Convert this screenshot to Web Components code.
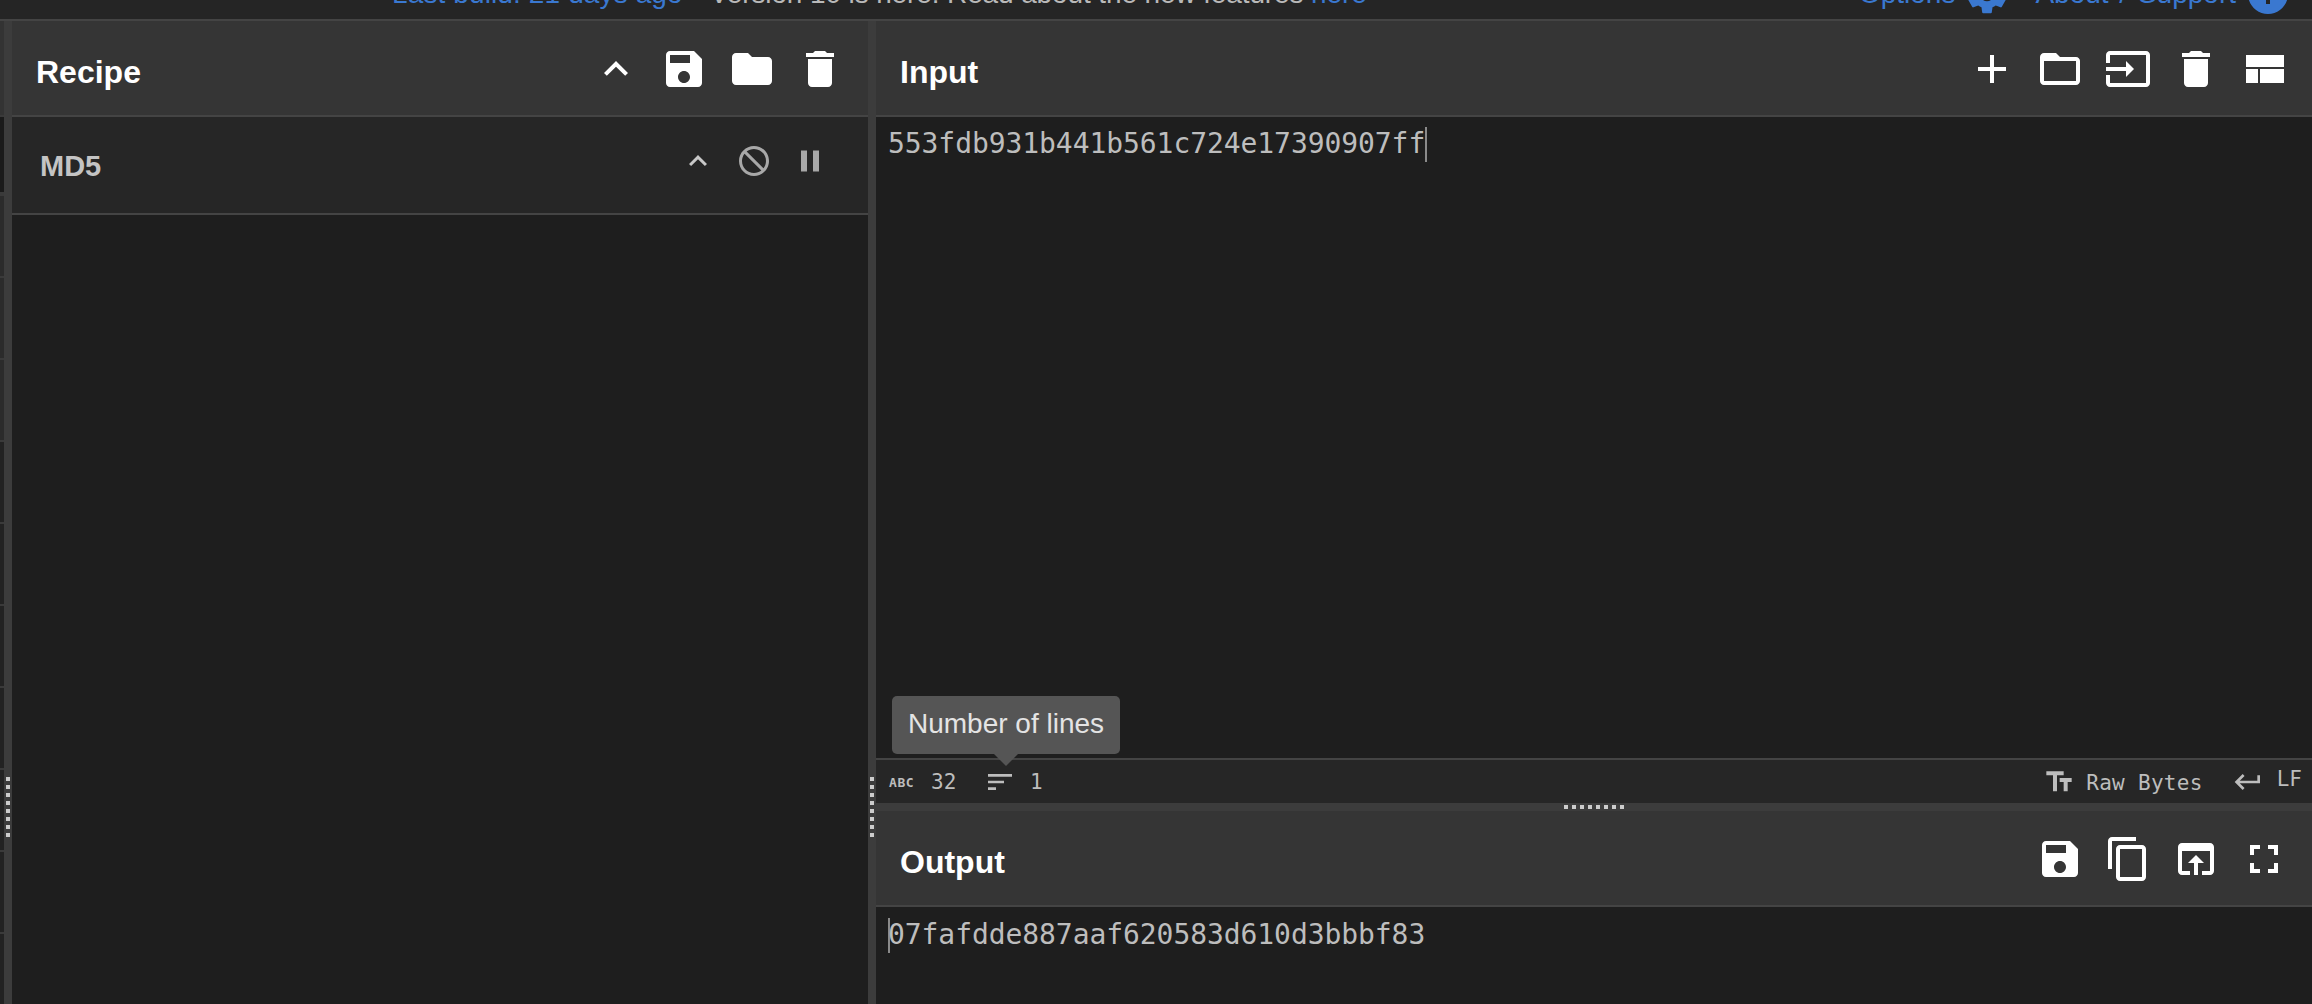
<!DOCTYPE html>
<html lang="en">
<head>
<meta charset="utf-8">
<title>CyberChef</title>
<style>
    html, body {
        margin: 0;
        height: 100%;
        overflow: hidden;
        background: #1e1e1e;
    }
</style>
</head>
<body>
<chef-app></chef-app>

<script>
/**
 * Material icon paths used across the panes.
 */
const ICONS = {
    up: 'M7.41 15.41L12 10.83l4.59 4.58L18 14l-6-6-6 6z',
    save: 'M17 3H5c-1.11 0-2 .9-2 2v14c0 1.1.89 2 2 2h14c1.1 0 2-.9 2-2V7l-4-4zm-5 16c-1.66 0-3-1.34-3-3s1.34-3 3-3 3 1.34 3 3-1.34 3-3 3zm3-10H5V5h10v4z',
    folder: 'M10 4H4c-1.1 0-2 .9-2 2v12c0 1.1.9 2 2 2h16c1.1 0 2-.9 2-2V8c0-1.1-.9-2-2-2h-8l-2-2z',
    folderOpen: 'M10 4H4c-1.1 0-2 .9-2 2v12c0 1.1.9 2 2 2h16c1.1 0 2-.9 2-2V8c0-1.1-.9-2-2-2h-8l-2-2zm10 14H4V8h16v10z',
    trash: 'M6 19c0 1.1.9 2 2 2h8c1.1 0 2-.9 2-2V7H6v12zM19 4h-3.5l-1-1h-5l-1 1H5v2h14V4z',
    ban: 'M12 2C17.52 2 22 6.48 22 12s-4.48 10-10 10-10-4.48-10-10S6.48 2 12 2zM20 12c0-4.42-3.58-8-8-8-1.85 0-3.55.63-4.9 1.69L18.31 16.9C19.37 15.55 20 13.85 20 12zm-8 8c1.85 0 3.55-.63 4.9-1.69L5.69 7.1C4.63 8.45 4 10.15 4 12c0 4.42 3.58 8 8 8z',
    pause: 'M6 19h4V5H6v14zm8-14v14h4V5h-4z',
    plus: 'M19 13h-6v6h-2v-6H5v-2h6V5h2v6h6v2z',
    input: 'M21 3.01H3c-1.1 0-2 .9-2 2V9h2V4.99h18v14.03H3V15H1v4.01c0 1.1.9 1.98 2 1.98h18c1.1 0 2-.88 2-1.98v-14c0-1.11-.9-2-2-2zM11 16l4-4-4-4v3H1v2h10v3z',
    quilt: 'M3 5h19v6H3zM3 12h6v7H3zM10 12h12v7H10z',
    copy: 'M16 1H4c-1.1 0-2 .9-2 2v14h2V3h12V1zm3 4H8c-1.1 0-2 .9-2 2v14c0 1.1.9 2 2 2h11c1.1 0 2-.9 2-2V7c0-1.1-.9-2-2-2zm0 16H8V7h11v14z',
    openIn: 'M19 4H5c-1.11 0-2 .9-2 2v12c0 1.1.89 2 2 2h4v-2H5V8h14v10h-4v2h4c1.1 0 2-.9 2-2V6c0-1.1-.89-2-2-2zm-7 6l-4 4h3v6h2v-6h3l-4-4z',
    fullscreen: 'M7 14H5v5h5v-2H7v-3zm-2-4h2V7h3V5H5v5zm12 7h-3v2h5v-5h-2v3zM14 5v2h3v3h2V5h-5z',
    lines: 'M3 18h6v-2H3v2zM3 6v2h18V6H3zm0 7h12v-2H3v2z',
    textFields: 'M2.5 4v3h5v12h3V7h5V4h-13zm19 5h-9v3h3v7h3v-7h3V9z',
    enter: 'M19 7v4H5.83l3.58-3.59L8 6l-6 6 6 6 1.41-1.41L5.83 13H21V7z',
    gear: 'M19.14 12.94c.04-.3.06-.61.06-.94 0-.32-.02-.64-.07-.94l2.03-1.58c.18-.14.23-.41.12-.61l-1.92-3.32c-.12-.22-.37-.29-.59-.22l-2.39.96c-.5-.38-1.03-.7-1.62-.94l-.36-2.54c-.04-.24-.24-.41-.48-.41h-3.84c-.24 0-.43.17-.47.41l-.36 2.54c-.59.24-1.13.57-1.62.94l-2.39-.96c-.22-.08-.47 0-.59.22L2.74 8.87c-.12.21-.08.47.12.61l2.03 1.58c-.05.3-.09.63-.09.94s.02.64.07.94l-2.03 1.58c-.18.14-.23.41-.12.61l1.92 3.32c.12.22.37.29.59.22l2.39-.96c.5.38 1.03.7 1.62.94l.36 2.54c.05.24.24.41.48.41h3.84c.24 0 .44-.17.47-.41l.36-2.54c.59-.24 1.13-.56 1.62-.94l2.39.96c.22.08.47 0 .59-.22l1.92-3.32c.12-.22.07-.47-.12-.61l-2.01-1.58zM12 15.6c-1.98 0-3.6-1.62-3.6-3.6s1.62-3.6 3.6-3.6 3.6 1.62 3.6 3.6-1.62 3.6-3.6 3.6z',
    info: 'M12 2C6.48 2 2 6.48 2 12s4.48 10 10 10 10-4.48 10-10S17.52 2 12 2zm1 15h-2v-6h2v6zm0-8h-2V7h2v2z'
};

/**
 * One icon in a square box. Size and colour come from attributes.
 */
class ChefIcon extends HTMLElement {
    connectedCallback () {
        const size = this.getAttribute('size') || 48;
        const shadow = this.attachShadow({ mode: 'open' });
        shadow.innerHTML = `
<style>
    :host { display: block; width: ${size}px; height: ${size}px; flex: none; }
    svg { display: block; width: 100%; height: 100%; fill: currentColor; }
</style>
<svg viewBox="0 0 24 24" aria-hidden="true"><path d="${ICONS[this.getAttribute('name')]}"></path></svg>`;
    }
}

const bannerTemplate = document.createElement('template');
bannerTemplate.innerHTML = `
<style>
    :host {
        display: flex;
        flex: none;
        align-items: flex-end;
        height: 19px;
        overflow: hidden;
        background: #252525;
        font: 28px/36px "Liberation Sans", Arial, sans-serif;
        color: #b9b9b9;
        white-space: nowrap;
    }
    .row {
        display: flex;
        align-items: center;
        width: 100%;
        height: 44px;
        flex: none;
        margin-bottom: 3px;
        padding-left: 392px;
        box-sizing: border-box;
    }
    a { color: #3a78d0; }
    .build { letter-spacing: .12px; }
    .notice { margin-left: 27px; letter-spacing: -.12px; }
    .links { display: flex; align-items: center; margin-left: auto; color: #3a78d0; padding-right: 20px; }
    .links span { margin-right: 8px; }
    .links span + chef-icon { margin-right: 24px; }
    .links .about { word-spacing: 3px; }
    .links chef-icon:last-child { margin-right: 0; }
</style>
<div class="row">
    <a class="build">Last build: 21 days ago</a>
    <span class="notice">Version 10 is here! Read about the new features <a>here</a></span>
    <div class="links">
        <span>Options</span><chef-icon name="gear" size="48"></chef-icon>
        <span class="about">About / Support</span><chef-icon name="info" size="48"></chef-icon>
    </div>
</div>`;

class ChefBanner extends HTMLElement {
    constructor () {
        super();
        this.attachShadow({ mode: 'open' });
        this.shadowRoot.appendChild(bannerTemplate.content.cloneNode(true));
    }
}

const headerTemplate = document.createElement('template');
headerTemplate.innerHTML = `
<style>
    :host {
        display: flex;
        flex: none;
        align-items: center;
        justify-content: space-between;
        height: 94px;
        padding: 0 24px 0 24px;
        border-bottom: 2px solid #444;
        background: #353535;
        color: #fff;
        font: bold 32px "Liberation Sans", Arial, sans-serif;
    }
    ::slotted([slot=title]) {
        display: block;
        padding-top: 8px;
    }
    .icons {
        display: flex;
        gap: 20px;
        margin-top: 2px;
    }
</style>
<slot name="title"></slot>
<div class="icons"><slot></slot></div>`;

class PaneHeader extends HTMLElement {
    constructor () {
        super();
        this.attachShadow({ mode: 'open' });
        this.shadowRoot.appendChild(headerTemplate.content.cloneNode(true));
    }
}

const opTemplate = document.createElement('template');
opTemplate.innerHTML = `
<style>
    :host {
        display: flex;
        flex: none;
        align-items: center;
        justify-content: space-between;
        height: 96px;
        padding: 0 40px 0 28px;
        border-bottom: 2px solid #444;
        background: #262626;
        color: #c4c4c4;
        font: bold 29px "Liberation Sans", Arial, sans-serif;
    }
    .name { padding-top: 2px; }
    .icons {
        display: flex;
        gap: 20px;
        margin-top: -8px;
        color: #a8a8a8;
    }
    .icons chef-icon:first-child { color: #c8c8c8; }
</style>
<span class="name"><slot></slot></span>
<div class="icons">
    <chef-icon name="up" size="36"></chef-icon>
    <chef-icon name="ban" size="36"></chef-icon>
    <chef-icon name="pause" size="36"></chef-icon>
</div>`;

class RecipeOperation extends HTMLElement {
    constructor () {
        super();
        this.attachShadow({ mode: 'open' });
        this.shadowRoot.appendChild(opTemplate.content.cloneNode(true));
    }
}

const codeTemplate = document.createElement('template');
codeTemplate.innerHTML = `
<style>
    :host {
        display: block;
        padding: 0 12px;
        font: 28px/36px "DejaVu Sans Mono", "Liberation Mono", monospace;
        letter-spacing: -.07px;
        color: #bdbdbd;
        white-space: nowrap;
    }
    .caret {
        display: inline-block;
        width: 0;
        height: 35px;
        vertical-align: -9px;
        border-left: 2px solid #8a8a8a;
        margin-right: -2px;
    }
</style>
<slot name="before"></slot><span class="caret"></span><slot></slot>`;

class CodeArea extends HTMLElement {
    constructor () {
        super();
        this.attachShadow({ mode: 'open' });
        this.shadowRoot.appendChild(codeTemplate.content.cloneNode(true));
    }
}

const statusTemplate = document.createElement('template');
statusTemplate.innerHTML = `
<style>
    :host {
        display: flex;
        flex: none;
        align-items: center;
        justify-content: space-between;
        height: 43px;
        padding: 0 10px 0 13px;
        border-top: 2px solid #444;
        background: #262626;
        color: #bdbdbd;
        font: 21px "DejaVu Sans Mono", "Liberation Mono", monospace;
    }
    .group { display: flex; align-items: center; }
    .abc { font-size: 13px; font-weight: bold; letter-spacing: .6px; width: 42px; padding-top: 2px; }
    .count { width: 53px; }
    .lines { margin-right: 14px; }
    .tt { margin-right: 11px; }
    .enc { margin-right: 29px; padding-top: 2px; letter-spacing: .3px; }
    .enter { margin-right: 13px; }
    .lf { margin-top: -5px; }
</style>
<div class="group">
    <span class="abc">ABC</span>
    <span class="count">32</span>
    <chef-icon class="lines" name="lines" size="32"></chef-icon>
    <span>1</span>
</div>
<div class="group">
    <chef-icon class="tt" name="textFields" size="32"></chef-icon>
    <span class="enc">Raw Bytes</span>
    <chef-icon class="enter" name="enter" size="32"></chef-icon>
    <span class="lf">LF</span>
</div>`;

class StatusBar extends HTMLElement {
    constructor () {
        super();
        this.attachShadow({ mode: 'open' });
        this.shadowRoot.appendChild(statusTemplate.content.cloneNode(true));
    }
}

const tipTemplate = document.createElement('template');
tipTemplate.innerHTML = `
<style>
    :host {
        position: absolute;
        left: 16px;
        bottom: 4px;
        padding: 0 16px 2px;
        box-sizing: border-box;
        height: 58px;
        display: flex;
        align-items: center;
        border-radius: 5px;
        background: #555;
        color: #e4e4e4;
        font: 28px "Liberation Sans", Arial, sans-serif;
        white-space: nowrap;
    }
    :host::after {
        content: "";
        position: absolute;
        left: 102px;
        top: 58px;
        border: 12px solid transparent;
        border-bottom: 0;
        border-top-color: #555;
    }
</style>
<slot></slot>`;

class ChefTooltip extends HTMLElement {
    constructor () {
        super();
        this.attachShadow({ mode: 'open' });
        this.shadowRoot.appendChild(tipTemplate.content.cloneNode(true));
    }
}

const gripTemplate = document.createElement('template');
gripTemplate.innerHTML = `
<style>
    :host {
        display: block;
        flex: none;
        background: #3c3c3c;
    }
    :host([axis=v]) { width: 8px; padding-top: 756px; box-sizing: border-box; }
    :host([axis=h]) { height: 8px; padding: 2px 0 0 688px; box-sizing: border-box; }
    .dots { display: block; }
    :host([axis=v]) .dots {
        width: 4px;
        height: 60px;
        margin-left: 2px;
        background: repeating-linear-gradient(to bottom, #ccc 0 4px, #3c3c3c 4px 8px);
    }
    :host([axis=h]) .dots {
        width: 60px;
        height: 4px;
        background: repeating-linear-gradient(to right, #ccc 0 4px, #3c3c3c 4px 8px);
    }
</style>
<span class="dots"></span>`;

class SplitGrip extends HTMLElement {
    constructor () {
        super();
        this.attachShadow({ mode: 'open' });
        this.shadowRoot.appendChild(gripTemplate.content.cloneNode(true));
    }
}

// sliver of the operations list that is still visible left of the first gutter
const opsTemplate = document.createElement('template');
opsTemplate.innerHTML = `
<style>
    :host {
        display: flex;
        flex-direction: column;
        flex: none;
        width: 4px;
        background: #222;
    }
    div { flex: none; box-sizing: border-box; border-bottom: 2px solid #3a3a3a; }
    .head { height: 96px; background: #333; }
    .open { height: 79px; background: #1a1a1a; border-bottom-width: 4px; }
    .row { height: 82px; }
    .lit { background: #2b2b2b; }
</style>
<div class="head"></div>
<div class="open"></div>
<div class="row lit"></div>
<div class="row lit"></div>
<div class="row lit"></div>
<div class="row"></div>
<div class="row"></div>
<div class="row"></div>
<div class="row"></div>
<div class="row"></div>
<div class="row"></div>
<div class="row"></div>`;

class OpsSliver extends HTMLElement {
    constructor () {
        super();
        this.attachShadow({ mode: 'open' });
        this.shadowRoot.appendChild(opsTemplate.content.cloneNode(true));
    }
}

const appTemplate = document.createElement('template');
appTemplate.innerHTML = `
<style>
    :host {
        display: flex;
        flex-direction: column;
        height: 1004px;
        overflow: hidden;
        background: #1e1e1e;
    }
    .rule { flex: none; height: 2px; background: #444; }
    .work { flex: 1; display: flex; min-height: 0; }
    .recipe { flex: none; width: 856px; display: flex; flex-direction: column; }
    .io { flex: 1; min-width: 0; display: flex; flex-direction: column; }
    .input { flex: none; height: 782px; display: flex; flex-direction: column; }
    .input-body { flex: 1; position: relative; padding-top: 9px; }
    .output-body { padding-top: 10px; }
</style>
<chef-banner></chef-banner>
<div class="rule"></div>
<div class="work">
    <ops-sliver></ops-sliver>
    <split-grip axis="v"></split-grip>
    <section class="recipe">
        <pane-header>
            <span slot="title">Recipe</span>
            <chef-icon name="up"></chef-icon>
            <chef-icon name="save"></chef-icon>
            <chef-icon name="folder"></chef-icon>
            <chef-icon name="trash"></chef-icon>
        </pane-header>
        <recipe-operation>MD5</recipe-operation>
    </section>
    <split-grip axis="v"></split-grip>
    <section class="io">
        <div class="input">
            <pane-header>
                <span slot="title">Input</span>
                <chef-icon name="plus"></chef-icon>
                <chef-icon name="folderOpen"></chef-icon>
                <chef-icon name="input"></chef-icon>
                <chef-icon name="trash"></chef-icon>
                <chef-icon name="quilt"></chef-icon>
            </pane-header>
            <div class="input-body">
                <code-area><span slot="before">553fdb931b441b561c724e17390907ff</span></code-area>
                <chef-tooltip>Number of lines</chef-tooltip>
            </div>
            <status-bar></status-bar>
        </div>
        <split-grip axis="h"></split-grip>
        <pane-header>
            <span slot="title">Output</span>
            <chef-icon name="save"></chef-icon>
            <chef-icon name="copy"></chef-icon>
            <chef-icon name="openIn"></chef-icon>
            <chef-icon name="fullscreen"></chef-icon>
        </pane-header>
        <div class="output-body">
            <code-area>07fafdde887aaf620583d610d3bbbf83</code-area>
        </div>
    </section>
</div>`;

class ChefApp extends HTMLElement {
    constructor () {
        super();
        this.attachShadow({ mode: 'open' });
        this.shadowRoot.appendChild(appTemplate.content.cloneNode(true));
    }
}

window.customElements.define('chef-icon', ChefIcon);
window.customElements.define('chef-banner', ChefBanner);
window.customElements.define('pane-header', PaneHeader);
window.customElements.define('recipe-operation', RecipeOperation);
window.customElements.define('code-area', CodeArea);
window.customElements.define('status-bar', StatusBar);
window.customElements.define('chef-tooltip', ChefTooltip);
window.customElements.define('split-grip', SplitGrip);
window.customElements.define('ops-sliver', OpsSliver);
window.customElements.define('chef-app', ChefApp);
</script>
</body>
</html>
